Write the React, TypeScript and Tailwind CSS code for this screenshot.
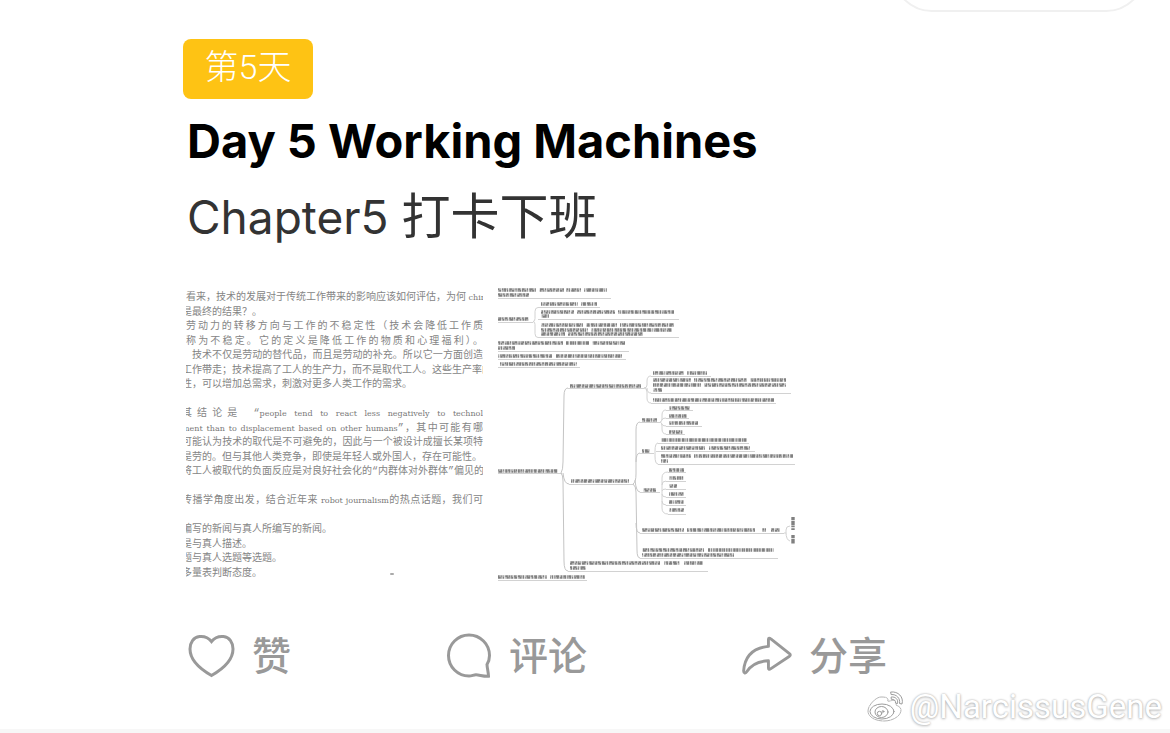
import React from "react";

type Line = { text: string; full?: boolean; shift?: boolean; mark?: boolean };

const noteLines: Line[] = [
  { text: "看来，技术的发展对于传统工作带来的影响应该如何评估，为何 chin", full: true },
  { text: "是最终的结果？。", shift: true },
  { text: "劳动力的转移方向与工作的不稳定性（技术会降低工作质", full: true },
  { text: "称为不稳定。它的定义是降低工作的物质和心理福利）。", full: true },
  { text: "，技术不仅是劳动的替代品，而且是劳动的补充。所以它一方面创造", full: true, shift: true },
  { text: "工作带走；技术提高了工人的生产力，而不是取代工人。这些生产率的", full: true, shift: true },
  { text: "性，可以增加总需求，刺激对更多人类工作的需求。", shift: true },
  { text: "" },
  { text: "其结论是 “people tend to react less negatively to technol", full: true, shift: true },
  { text: "ment than to displacement based on other humans”，其中可能有哪", full: true, shift: true },
  { text: "可能认为技术的取代是不可避免的，因此与一个被设计成擅长某项特", full: true, shift: true },
  { text: "是劳的。但与其他人类竞争，即使是年轻人或外国人，存在可能性。.", full: true, shift: true },
  { text: "将工人被取代的负面反应是对良好社会化的“内群体对外群体”偏见的", full: true, shift: true },
  { text: "" },
  { text: "传播学角度出发，结合近年来 robot journalism的热点话题，我们可", full: true, shift: true },
  { text: "" },
  { text: "编写的新闻与真人所编写的新闻。", shift: true },
  { text: "是与真人描述。", shift: true },
  { text: "题与真人选题等选题。", shift: true },
  { text: "多量表判断态度。", shift: true, mark: true },
];

function NoteThumbnail() {
  return (
    <div
      role="img"
      aria-label="Notes"
      className="flex h-[296px] w-[297px] flex-col overflow-hidden pt-[6px] font-['Liberation_Mono','Noto_Sans_CJK_SC',monospace] text-[10px] text-[#858585]"
    >
      {noteLines.map((l, i) => (
        <div
          key={i}
          className={`flex-1 whitespace-nowrap leading-[14px] ${l.shift ? "-ml-1" : ""} ${l.full ? "[text-align-last:justify]" : ""} ${l.mark ? "flex items-center gap-32" : ""}`}
        >
          {l.text.split(/( ?[A-Za-z][A-Za-z ]*)/).map((part, j) =>
            j % 2 ? (
              <span key={j} className="font-['DejaVu_Serif',serif] text-[8px] text-[#777777]">
                {part}
              </span>
            ) : (
              part
            ),
          )}
          {l.mark && <span className="h-0.5 w-1 rounded-full bg-[#aaaaaa]" />}
        </div>
      ))}
    </div>
  );
}

const rows: [number, number, number][] = [
  [498, 536, 290], [539, 564, 290], [566, 581, 290], [584, 607, 290], [498, 529, 295],
  [541, 578, 304], [581, 597, 304],
  [541, 574, 312], [577, 615, 312], [618, 674, 312], [541, 549, 316],
  [498, 529, 319],
  [541, 583, 325], [586, 617, 325], [620, 674, 325], [541, 588, 330], [591, 672, 330], [541, 565, 334], [568, 643, 334],
  [498, 563, 343], [566, 589, 343], [592, 625, 343], [498, 515, 348],
  [498, 552, 356], [556, 622, 356], [500, 577, 364],
  [653, 684, 373], [687, 707, 373],
  [653, 691, 380], [694, 747, 380], [750, 786, 380], [653, 701, 385], [704, 786, 385], [653, 662, 390],
  [653, 774, 400], [570, 641, 386],
  [669, 690, 408], [669, 687, 416], [669, 698, 423], [669, 683, 432],
  [642, 657, 420], [661, 747, 440], [661, 705, 448], [709, 750, 448],
  [661, 691, 456], [694, 793, 456], [661, 668, 461], [642, 650, 451],
  [498, 558, 471], [571, 629, 481], [643, 656, 490],
  [669, 684, 470], [669, 684, 478], [669, 677, 486], [669, 684, 494], [669, 684, 502], [669, 684, 510],
  [642, 684, 530], [687, 755, 530], [762, 766, 530], [771, 780, 530],
  [642, 704, 550], [708, 774, 550], [642, 734, 555],
  [570, 660, 563], [664, 680, 563], [684, 703, 563], [570, 586, 568],
  [498, 547, 577], [550, 585, 577],
];

const rules: [number, number, number][] = [
  [498, 611, 298], [538, 600, 307], [538, 679, 319], [498, 533, 322], [538, 679, 337], [498, 629, 351],
  [498, 626, 359], [498, 580, 367], [651, 711, 376], [651, 791, 393], [651, 776, 403], [568, 644, 388],
  [666, 693, 410], [666, 689, 418], [666, 702, 426], [666, 685, 434], [640, 660, 422],
  [658, 749, 443], [656, 755, 451], [658, 795, 464], [640, 654, 453], [498, 562, 473], [569, 633, 484],
  [640, 660, 492], [668, 686, 472], [666, 686, 481], [666, 686, 489], [666, 686, 497], [666, 686, 505],
  [668, 686, 514], [640, 784, 533], [640, 778, 558], [568, 708, 571], [498, 587, 580],
];

function MindMapThumbnail() {
  return (
    <svg role="img" aria-label="Mind map" viewBox="497 285 298 298" className="h-[298px] w-[298px] shrink-0" fill="none">
      <defs>
        <filter id="soft" x="-2%" y="-2%" width="104%" height="104%">
          <feGaussianBlur stdDeviation=".7" />
        </filter>
      </defs>
      <g stroke="#d2d2d2" strokeWidth="1">
        {rules.map(([a, b, y], i) => (
          <path key={i} d={`M${a} ${y + 0.5}H${b}`} />
        ))}
        <path d="M538 307.500q-3 0-3 4v7q0 3-2 3q2 0 2 3v9q0 4 3 4" />
        <path d="M651 376q-4 0-4 5v4q0 3-3 3q3 0 3 4v6q0 5 4 5M647 388q0 5 4 5" />
        <path d="M666 410q-4 0-4 5v4q0 3-2 3q2 0 2 4v3q0 5 4 5M662 420q0-2 4-2M662 424q0 2 4 2" />
        <path d="M658 443q-3 0-3 8v5q0 8 3 8" />
        <path d="M668 472q-6 0-6 6v30q0 6 6 6M662 485q0-4 4-4M662 491q0-2 4-2M662 494q0 3 4 3M662 501q0 4 4 4" />
        <path d="M790 526q-4 0-4 4v2q0 8 4 9M784 533h2" />
      </g>
      <g stroke="#c4c4c4" strokeWidth="1">
        <path d="M568 388q-4 0-4 8l-1 66q0 8-2 11q2 2 2 8l1 80q0 10 4 10M563 473q1 11 6 11" />
        <path d="M640 422q-4 0-4 8v44q0 8-3 10q3 2 3 8l1 58q0 8 3 8M636 523q0 10 4 10M635 480q1 12 5 12M636 462q0-9 4-9" />
      </g>
      <g filter="url(#soft)">
        <g stroke="#808080" strokeWidth="3.400" strokeDasharray="3.200 .7 4.100 .5 1.800 .9 5.300 .6 2.400 .5">
          {rows.map(([a, b, y], i) => (
            <path key={i} d={`M${a} ${y}H${b}`} strokeDashoffset={i * 3} />
          ))}
          <path d="M793 517v13M793 535v9" />
        </g>
        <g stroke="#ffffff" strokeWidth="1" strokeDasharray="1.300 2.900 2.100 1.700 .9 3.700" opacity=".8">
          {rows.map(([a, b, y], i) => (
            <path key={i} d={`M${a} ${y + 1}H${b}`} strokeDashoffset={i * 2} />
          ))}
          {rows.map(([a, b, y], i) => (
            <path key={i} d={`M${a} ${y - 1}H${b}`} strokeDashoffset={i * 5 + 3} />
          ))}
        </g>
      </g>
    </svg>
  );
}

function WeiboMark() {
  return (
    <svg aria-hidden="true" viewBox="0 0 40 34" className="h-[34px] w-10" fill="#fff" stroke="#9c9c9c" strokeWidth="1" strokeLinecap="round">
      <path d="M15 7C10 7 2 15 2 21s7 10 16 10 17-5 17-11c0-3-3-4-5-5 1-3 0-6-6-4-1 0-3 1-2-1 0-3-4-3-7-3z" stroke="#b5b5b5" strokeDasharray="7 1" />
      <ellipse cx="16" cy="21.500" rx="12" ry="7.500" />
      <ellipse cx="15.500" cy="22" rx="6.500" ry="5.500" />
      <circle cx="13.500" cy="23.500" r="2.200" />
      <circle cx="17" cy="21.500" r=".9" />
      <path d="M25 2c7-1 13 5 11 12l-2.500-.5c1-5-3-9.500-8-9z" />
      <path d="M25.500 7c4-.6 7 2.500 6 6.500l-2-.4c.4-2.500-1.400-4.200-3.800-3.800z" />
    </svg>
  );
}

function HeartIcon() {
  return (
    <svg aria-hidden="true" viewBox="0 0 48 44" className="h-11 w-12" fill="none" stroke="#999999" strokeWidth="3" strokeLinejoin="miter">
      <path d="M24.500 7.500C21 3 16 2.200 12.500 2.500 6.500 3.200 3 8.500 3 15c0 9.500 7.500 18.500 21.500 26.500C38.500 33.500 46 24.500 46 15c0-6.500-3.500-11.800-9.500-12.500C33 2.200 28 3 24.500 7.500z" />
    </svg>
  );
}

function CommentIcon() {
  return (
    <svg aria-hidden="true" viewBox="0 0 46 46" className="h-[46px] w-[46px]" fill="none" stroke="#999999" strokeWidth="3">
      <path d="M41 31.500C42.800 28.500 43.500 26 43.500 22.500a20.500 20.500 0 1 0-20.500 20.500c3 0 4.500-1.200 7-1.200 3.500 0 7 1.700 12.500 1.400-.2-4.500-1.300-7.500-1.500-11.700z" />
    </svg>
  );
}

function ShareIcon() {
  return (
    <svg aria-hidden="true" viewBox="1 0 52 42" className="h-[42px] w-[50px]" fill="none" stroke="#999999" strokeWidth="3" strokeLinejoin="round">
      <path d="M28.500 3.500V11C13 12.500 4 20 2.700 36.500c0 2.500 2 3 3.400.7C11 29.500 18 26.300 28.500 26v7.500c0 1.500 1 1.700 2.200.9L50 21.500c1.700-1.300 1.700-2 0-3.300L31 3.300c-1.500-1.300-2.500-1-2.500.2z" />
    </svg>
  );
}

function Action({ icon, label }: { icon: React.ReactNode; label: string }) {
  return (
    <button type="button" className="flex items-center gap-[17px] text-[39px] font-medium leading-[46px] text-[#999999]">
      {icon}
      <span>{label}</span>
    </button>
  );
}

export default function App() {
  return (
    <div className="bg-white font-['Inter','Noto_Sans_CJK_SC',sans-serif]">
      <header className="flex h-3 items-end justify-end overflow-hidden pr-6">
        <div className="h-20 w-[254px] shrink-0 rounded-full border-2 border-[#f0f0f0]" />
      </header>
      <article className="pl-[183px] pt-[27px]">
        <span className="inline-flex h-[60px] w-[130px] items-start justify-center rounded-lg bg-[#fec314] pt-1 font-['Roboto','Noto_Sans_CJK_SC',sans-serif] text-[34px] font-light leading-[48px] text-white">
          第5天
        </span>
        <div className="pl-1">
          <h1 className="mt-3 text-[47px] font-bold leading-[60px] text-black">Day 5 Working Machines</h1>
          <p className="mt-2 text-[46px] font-normal leading-[76px] text-[#333333]">
            Chapter5 <span className="text-[49px]">打卡下班</span>
          </p>
        </div>
        <div className="mt-[30px] flex gap-[14px] pl-[3px]">
          <NoteThumbnail />
          <MindMapThumbnail />
        </div>
        <div className="mt-[50px] flex gap-[155px] pl-1">
          <Action icon={<HeartIcon />} label="赞" />
          <Action icon={<CommentIcon />} label="评论" />
          <Action icon={<ShareIcon />} label="分享" />
        </div>
      </article>
      <footer className="flex items-center justify-end gap-1 border-b-4 border-[#f7f7f7] pb-1 pr-2 pt-[10px]">
        <WeiboMark />
        <span className="font-['Roboto',sans-serif] text-[33px] leading-9 text-white [text-shadow:0_0_2px_#a8a8a8,0_1px_3px_#c4c4c4]">
          @NarcissusGene
        </span>
      </footer>
    </div>
  );
}
